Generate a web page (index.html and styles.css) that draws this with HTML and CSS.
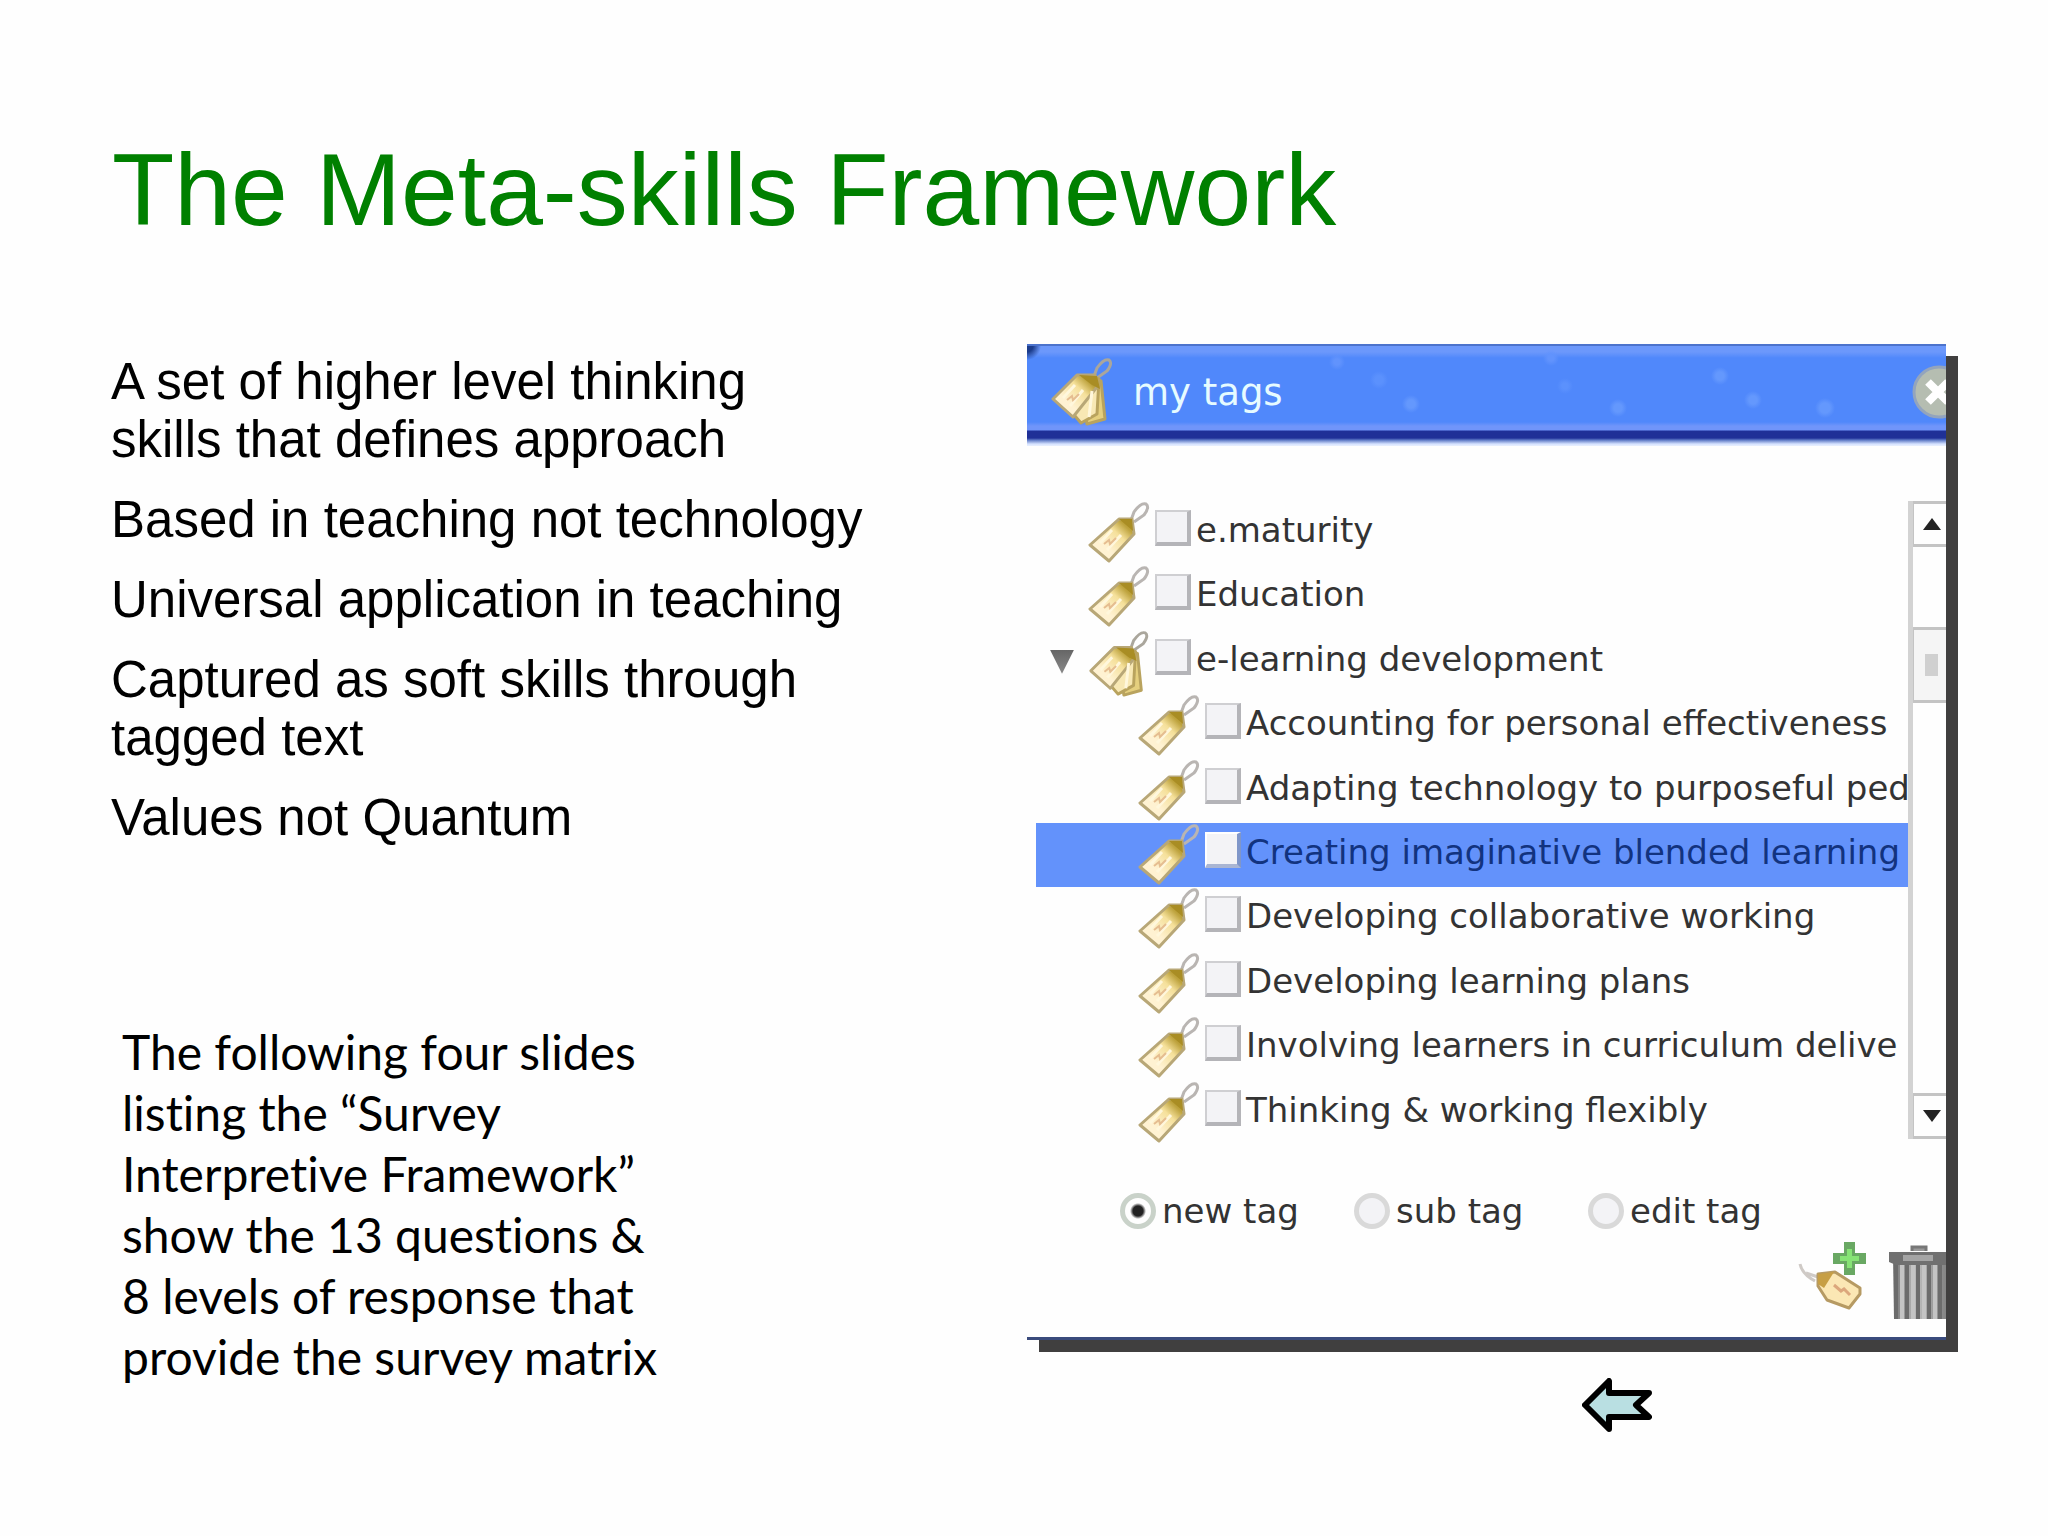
FILE: index.html
```html
<!DOCTYPE html>
<html lang="en">
<head>
  <meta charset="UTF-8">
  <meta name="viewport" content="width=device-width, initial-scale=1.0">
  <title>The Meta-skills Framework</title>
  <link rel="stylesheet" href="styles.css">
</head>
<body>
  <!-- Shared icons -->
  <svg class="icon-defs" aria-hidden="true">
    <defs>
      <linearGradient id="tag-fill" x1="1" y1="0" x2="0" y2="1">
        <stop offset="0.18" stop-color="#bda23c"/>
        <stop offset="0.36" stop-color="#f5e09a"/>
        <stop offset="0.65" stop-color="#fff2d2"/>
      </linearGradient>
      <linearGradient id="can-fill" x1="0" y1="0" x2="1" y2="0">
        <stop offset="0" stop-color="#777"/>
        <stop offset="0.4" stop-color="#bbb"/>
        <stop offset="1" stop-color="#777"/>
      </linearGradient>
      <symbol id="tag" viewBox="0 0 62 62">
        <path d="M42 22 L46 11 Q53 1 58 3 Q62 6 56 14 L46 21" fill="none" stroke="#b9b5b2" stroke-width="3"/>
        <path d="M31 18 L44 18 L46 33 L21 60 L2 44 Z" fill="url(#tag-fill)" stroke="#b8a777" stroke-width="3" stroke-linejoin="round"/>
        <path d="M31 18 L44 18 L45 30 Z" fill="#a98d24"/>
        <path d="M12 42 L24 29 M19 49 L33 34" stroke="#fff7dc" stroke-width="3"/>
        <path d="M16 43 l5 -4 l1 4 l6 -6" fill="none" stroke="#e5bd90" stroke-width="2"/>
      </symbol>
      <symbol id="tags" viewBox="0 0 62 70">
        <path d="M42 22 L46 11 Q53 1 58 3 Q62 6 56 14 L46 21" fill="none" stroke="#aaa69c" stroke-width="3"/>
        <path d="M38 20 L50 24 L54 62 L36 67 L30 30 Z" fill="#e5cf7e" stroke="#b9a35e" stroke-width="3" stroke-linejoin="round"/>
        <path d="M34 19 L48 22 L46 57 L30 66 L18 52 Z" fill="#f8e8b4" stroke="#b9a35e" stroke-width="3" stroke-linejoin="round"/>
        <path d="M26 18 L44 18 L46 30 L22 60 L2 42 Z" fill="url(#tag-fill)" stroke="#b8a777" stroke-width="3" stroke-linejoin="round"/>
        <path d="M28 18 L46 19 L49 32 L41 28 Z" fill="#a98d24"/>
        <path d="M12 41 L24 28 M19 49 L32 33 M41 34 L38 60" stroke="#fff7dc" stroke-width="3"/>
        <path d="M16 43 l5 -4 l1 4 l6 -6" fill="none" stroke="#e5bd90" stroke-width="2"/>
      </symbol>
    </defs>
  </svg>

  <main class="slide">
    <h1 class="title">The Meta-skills Framework</h1>

    <div class="columns">
      <section class="text-column">
        <div class="points">
          <p>A set of higher level thinking<br>skills that defines approach</p>
          <p>Based in teaching not technology</p>
          <p>Universal application in teaching</p>
          <p>Captured as soft skills through<br>tagged text</p>
          <p>Values not Quantum</p>
        </div>
        <p class="note">The following four slides<br>listing the “Survey<br>Interpretive Framework”<br>show the 13 questions &amp;<br>8 levels of response that<br>provide the survey matrix</p>
      </section>

      <section class="panel-column">
        <div class="panel">
          <header class="panel-header">
            <svg class="header-icon" aria-hidden="true"><use href="#tags"/></svg>
            <h2 class="panel-title">my tags</h2>
            <button class="close" type="button" aria-label="Close">
              <svg viewBox="0 0 54 54" aria-hidden="true">
                <circle cx="27" cy="27" r="25" fill="#b5bdb1" stroke="#93a4bd" stroke-width="3"/>
                <path d="M16 17 L36 37 M36 17 L16 37" stroke="#fff" stroke-width="8"/>
              </svg>
            </button>
          </header>

          <div class="tag-browser">
            <ul class="tag-list">
              <li class="tag-row">
                <svg class="tag-icon" aria-hidden="true"><use href="#tag"/></svg>
                <input class="check" type="checkbox" id="t1"><label for="t1">e.maturity</label>
              </li>
              <li class="tag-row">
                <svg class="tag-icon" aria-hidden="true"><use href="#tag"/></svg>
                <input class="check" type="checkbox" id="t2"><label for="t2">Education</label>
              </li>
              <li class="tag-row parent">
                <button class="twisty" type="button" aria-label="Collapse"></button>
                <svg class="tags-icon" aria-hidden="true"><use href="#tags"/></svg>
                <input class="check" type="checkbox" id="t3"><label for="t3">e-learning development</label>
              </li>
              <li class="tag-row child">
                <svg class="tag-icon" aria-hidden="true"><use href="#tag"/></svg>
                <input class="check" type="checkbox" id="t4"><label for="t4">Accounting for personal effectiveness</label>
              </li>
              <li class="tag-row child">
                <svg class="tag-icon" aria-hidden="true"><use href="#tag"/></svg>
                <input class="check" type="checkbox" id="t5"><label for="t5">Adapting technology to purposeful ped</label>
              </li>
              <li class="tag-row child selected">
                <svg class="tag-icon" aria-hidden="true"><use href="#tag"/></svg>
                <input class="check" type="checkbox" id="t6"><label for="t6">Creating imaginative blended learning</label>
              </li>
              <li class="tag-row child">
                <svg class="tag-icon" aria-hidden="true"><use href="#tag"/></svg>
                <input class="check" type="checkbox" id="t7"><label for="t7">Developing collaborative working</label>
              </li>
              <li class="tag-row child">
                <svg class="tag-icon" aria-hidden="true"><use href="#tag"/></svg>
                <input class="check" type="checkbox" id="t8"><label for="t8">Developing learning plans</label>
              </li>
              <li class="tag-row child">
                <svg class="tag-icon" aria-hidden="true"><use href="#tag"/></svg>
                <input class="check" type="checkbox" id="t9"><label for="t9">Involving learners in curriculum delive</label>
              </li>
              <li class="tag-row child">
                <svg class="tag-icon" aria-hidden="true"><use href="#tag"/></svg>
                <input class="check" type="checkbox" id="t10"><label for="t10">Thinking &amp; working flexibly</label>
              </li>
            </ul>
            <div class="scrollbar">
              <button class="scroll-button" type="button" aria-label="Scroll up">
                <svg viewBox="0 0 18 12" aria-hidden="true"><path d="M9 0 L18 12 H0 Z" fill="#222"/></svg>
              </button>
              <div class="track"><div class="thumb"></div></div>
              <button class="scroll-button" type="button" aria-label="Scroll down">
                <svg viewBox="0 0 18 12" aria-hidden="true"><path d="M0 0 H18 L9 12 Z" fill="#222"/></svg>
              </button>
            </div>
          </div>

          <div class="modes">
            <div class="mode"><input class="radio" type="radio" name="mode" id="m1" checked><label for="m1">new tag</label></div>
            <div class="mode"><input class="radio" type="radio" name="mode" id="m2"><label for="m2">sub tag</label></div>
            <div class="mode"><input class="radio" type="radio" name="mode" id="m3"><label for="m3">edit tag</label></div>
          </div>

          <div class="actions">
            <button class="action" type="button" aria-label="Add tag">
              <svg width="70" height="78" viewBox="0 0 70 78" aria-hidden="true">
                <path d="M20 35 L8 31 M17 39 Q4 32 2 22" fill="none" stroke="#cfcac6" stroke-width="3"/>
                <path d="M20 32 L37 30 L62 46 L62 52 L51 66 L29 58 L20 44 Z" fill="#fbe7b4" stroke="#b69a63" stroke-width="3" stroke-linejoin="round"/>
                <path d="M20 32 L36 30 L26 46 L20 42 Z" fill="#c79f45"/>
                <path d="M36 43 l7 6 l3 -2 l6 6" fill="none" stroke="#dca77c" stroke-width="3"/>
                <path d="M46 0 H57 V11 H68 V22 H57 V33 H46 V22 H35 V11 H46 Z" fill="#69a863"/>
                <path d="M49 7 H54 V14 H61 V19 H54 V26 H49 V19 H42 V14 H49 Z" fill="#86e375"/>
              </svg>
            </button>
            <button class="action" type="button" aria-label="Delete tag">
              <svg width="70" height="78" viewBox="0 0 70 78" aria-hidden="true">
                <path d="M5 18 H65 L63 77 H6 Z" fill="url(#can-fill)"/>
                <path d="M8 20 V77 M19 20 V77 M30 20 V77 M41 20 V77 M52 20 V77 M62 20 V77" stroke="#6c6c6c" stroke-width="4"/>
                <path d="M14 20 V77 M25 20 V77 M36 20 V77 M47 20 V77" stroke="#c4c4c4" stroke-width="4"/>
                <path d="M24 9 V5 H38 V9" fill="#999" stroke="#777" stroke-width="3"/>
                <path d="M1 10 H69 V19 L62 23 H8 L1 20 Z" fill="#707070"/>
                <path d="M15 16 H45" stroke="#a5a5a5" stroke-width="6"/>
              </svg>
            </button>
          </div>
        </div>

        <a class="back" href="#" aria-label="Back">
          <svg width="70" height="54" viewBox="0 0 70 54" aria-hidden="true">
            <path d="M3 27 L27 3 V15 H67 L54 27 L67 39 H27 V51 Z" fill="#b9dfe2" stroke="#000" stroke-width="6" stroke-linejoin="round"/>
          </svg>
        </a>
      </section>
    </div>
  </main>
</body>
</html>
```
FILE: styles.css
```css
* {
  box-sizing: border-box;
}
body {
  margin: 0;
  background: #fefefe;
  color: #000;
  font-family: "Liberation Sans", Arial, sans-serif;
}
h1, h2, p, ul {
  margin: 0;
  padding: 0;
  font-weight: normal;
}
button {
  padding: 0;
  border: none;
  background: none;
  cursor: pointer;
}
svg {
  display: block;
}
.icon-defs {
  position: absolute;
  width: 0;
  height: 0;
}
.slide {
  min-height: 100vh;
  padding: 132px 102px 0 108px;
}
.title {
  padding-left: 4px;
  color: #008000;
  font-size: 102px;
  line-height: 116px;
}
.columns {
  display: grid;
  grid-template-columns: 1fr 1fr;
  margin-top: 96px;
}

/* Left side */
.text-column {
  padding: 9px 0 0 3px;
}
.points {
  display: flex;
  flex-direction: column;
  gap: 22px;
  font-size: 51px;
  line-height: 58px;
}
.note {
  margin-top: 174px;
  padding-left: 11px;
  font-family: "Gill Sans", "Gill Sans MT", Lato, sans-serif;
  font-size: 48px;
  font-variant-ligatures: none;
  line-height: 61px;
}

/* Tag window */
.panel-column {
  min-width: 0;
}
.panel {
  overflow: hidden;
  border-bottom: 3px solid #3a4b7c;
  background: #fefefe;
  box-shadow: 12px 12px 0 #403f3f;
  color: #333;
  font-family: Verdana, "DejaVu Sans", sans-serif;
  font-size: 34px;
}
.panel-header {
  display: flex;
  align-items: center;
  height: 102px;
  padding: 8px 0 16px 24px;
  border-top: 2px solid #4c73cc;
  background:
    radial-gradient(circle at 0 0, #1b3c8c 6px, transparent 14px),
    radial-gradient(circle at 310px 16px, #6193fd 3px, transparent 8px),
    radial-gradient(circle at 352px 34px, #5b91fd 4px, transparent 9px),
    radial-gradient(circle at 384px 58px, #6498fd 4px, transparent 9px),
    radial-gradient(circle at 524px 12px, #6193fd 3px, transparent 8px),
    radial-gradient(circle at 538px 40px, #5b91fd 3px, transparent 8px),
    radial-gradient(circle at 591px 62px, #6498fd 4px, transparent 9px),
    radial-gradient(circle at 693px 30px, #6498fd 4px, transparent 9px),
    radial-gradient(circle at 726px 54px, #6498fd 4px, transparent 9px),
    radial-gradient(circle at 798px 62px, #6498fd 5px, transparent 10px),
    linear-gradient(#6c98fb 0, #6c98fb 6px, #5088fb 12px, #5088fb 76px, #7095fa 80px, #7095fa 84px, #1f3097 85px, #1f3097 92px, #5b77c4 94px, #d5e2ff 98px, #fefefe 102px);
}
.header-icon {
  width: 62px;
  height: 70px;
}
.panel-title {
  margin-left: 20px;
  padding-top: 2px;
  color: #e6fbff;
  font-size: 37px;
  line-height: 48px;
}
.close {
  flex: none;
  width: 54px;
  height: 54px;
  margin: 0 -20px 0 auto;
}
.tag-browser {
  display: flex;
  margin-top: 55px;
  padding-left: 9px;
}
.tag-list {
  display: grid;
  grid-auto-rows: 1fr;
  flex: 1;
  min-width: 0;
  min-height: 644px;
  overflow: hidden;
  list-style: none;
}
.tag-row {
  display: flex;
  align-items: flex-start;
  padding-left: 52px;
  line-height: 58px;
  white-space: nowrap;
}
.tag-row.child {
  padding-left: 102px;
}
.tag-row.parent {
  padding-left: 14px;
}
.tag-row.selected {
  background: #6392fb;
  color: #12337f;
}
.tag-icon, .tags-icon {
  flex: none;
  width: 62px;
  height: 62px;
}
/* the stacked icon hangs a little below its row */
.tags-icon {
  height: 68px;
  margin-bottom: -8px;
}
.twisty {
  flex: none;
  width: 24px;
  height: 24px;
  margin: 20px 14px 0 0;
  background: linear-gradient(#666, #8a8a8a);
  clip-path: polygon(0 0, 100% 0, 50% 100%);
}
.check, .radio {
  flex: none;
  appearance: none;
  width: 36px;
  height: 36px;
  margin: 9px 5px 0;
  background: #f3f3f6;
  border: 2px solid #cfcfd2;
}
.check {
  border-right: 4px solid #b4b4b8;
  border-bottom: 4px solid #b4b4b8;
}
.selected .check {
  border-color: #fff #7f96c9 #a9b5d3 #fff;
}

.scrollbar {
  display: flex;
  flex-direction: column;
  flex: none;
  width: 46px;
  height: 638px;
  margin-right: -8px;
  border-left: 5px solid #d3d3d3;
}
.scroll-button {
  height: 46px;
  padding-left: 9px;
  border: 3px solid #c4c4c4;
  border-left: 1px solid #c4c4c4;
}
.scroll-button svg {
  width: 18px;
  height: 12px;
}
.track {
  flex: 1;
  padding-top: 80px;
}
.thumb {
  height: 76px;
  border: 3px solid #c4c4c4;
  border-left-width: 1px;
  background: linear-gradient(#d0d0d0, #d0d0d0) 11px 24px / 13px 22px no-repeat #f5f5f5;
}

.modes {
  display: grid;
  grid-template-columns: repeat(3, 234px);
  margin-top: 45px;
  padding-left: 93px;
}
.mode {
  display: flex;
  align-items: center;
  gap: 6px;
  line-height: 42px;
}
.radio {
  margin: 0;
  border: 5px solid #d9d9d9;
  border-radius: 50%;
}
.radio:checked {
  border-color: #c9d2c9;
  background: radial-gradient(circle, #222 5px, #fefefe 8px);
}
.actions {
  display: flex;
  justify-content: flex-end;
  gap: 20px;
  margin-right: -12px;
  padding: 10px 0 17px;
}

/* Back arrow below the window */
.back {
  display: block;
  width: 70px;
  margin: 38px 0 0 auto;
  margin-right: 32%;
}
```
